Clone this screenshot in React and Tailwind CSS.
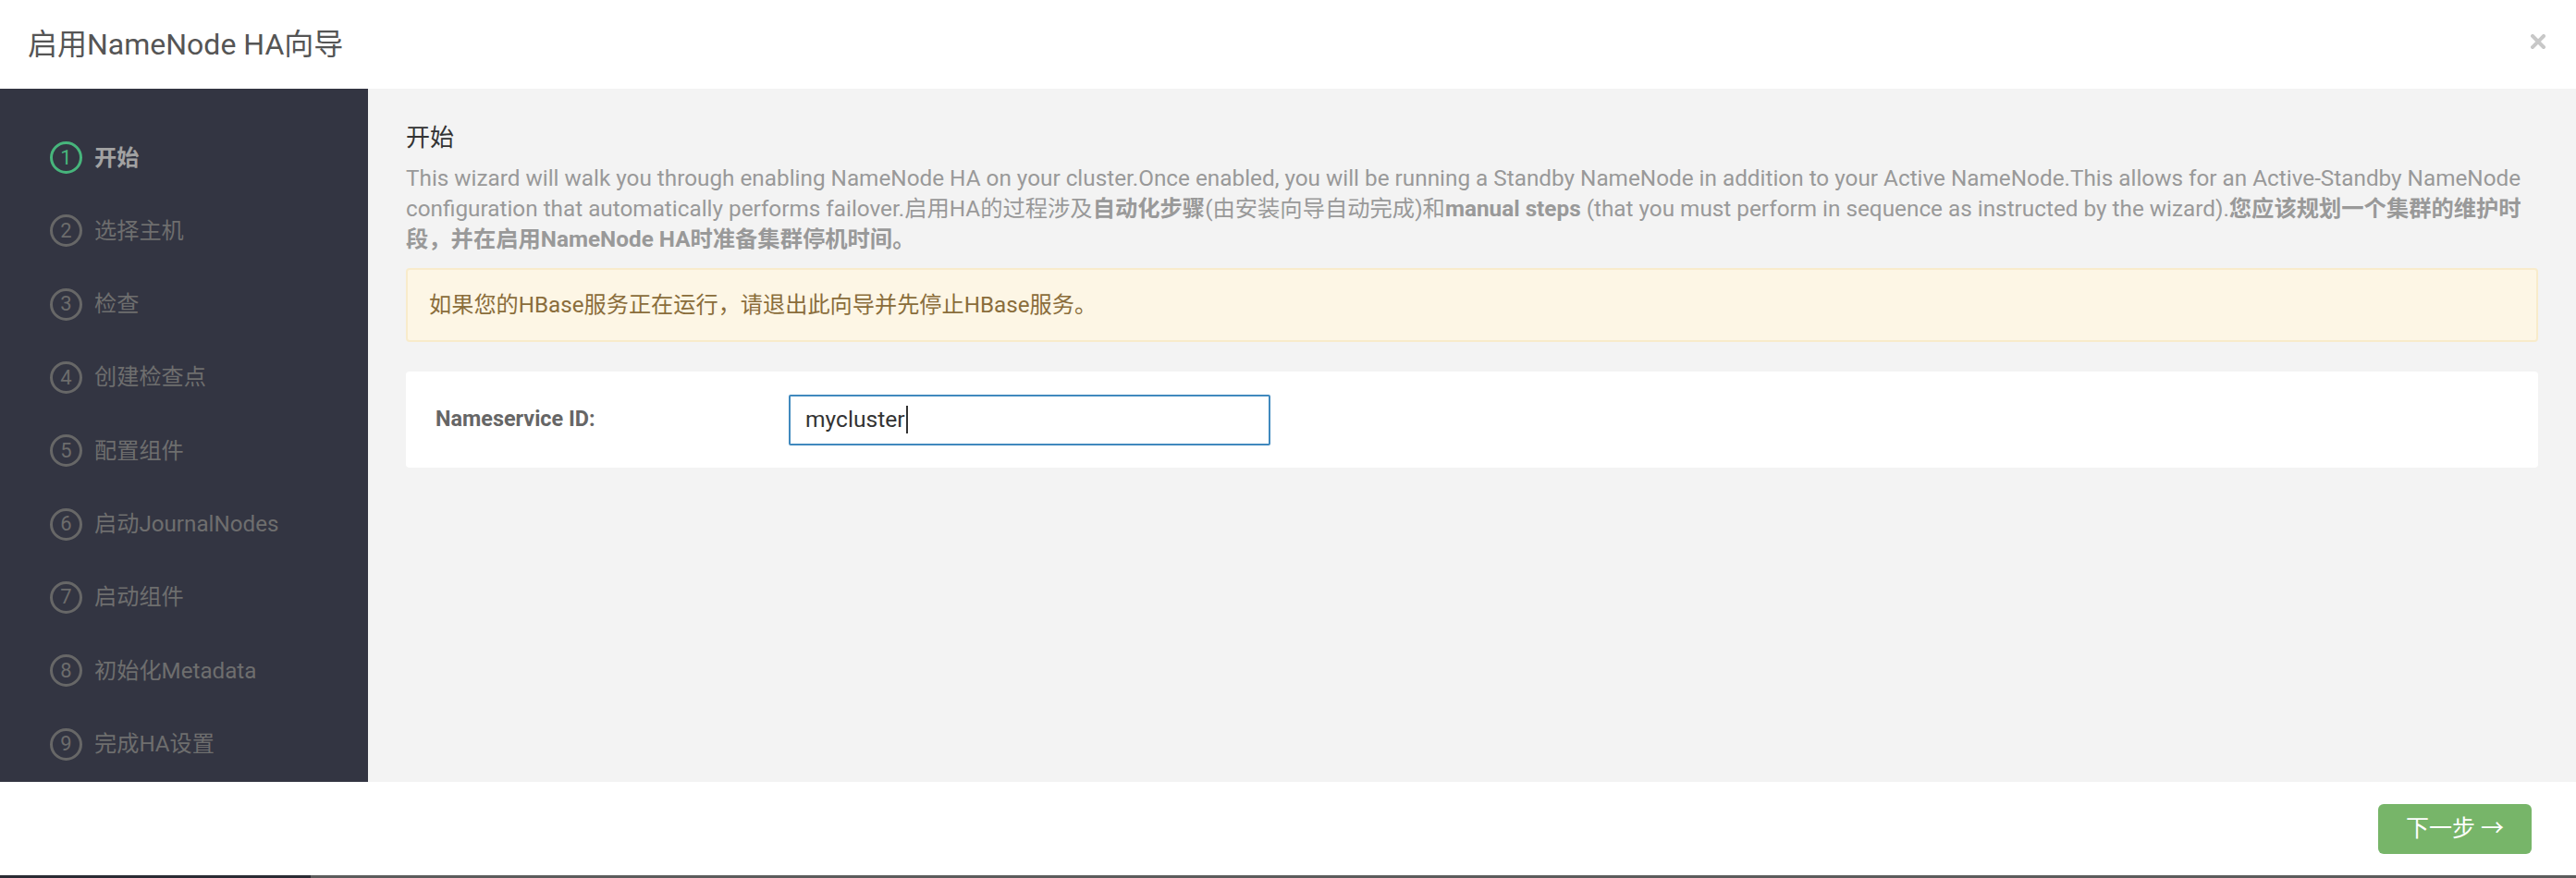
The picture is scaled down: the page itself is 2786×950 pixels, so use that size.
import React from "react";

const steps = [
  "开始",
  "选择主机",
  "检查",
  "创建检查点",
  "配置组件",
  "启动JournalNodes",
  "启动组件",
  "初始化Metadata",
  "完成HA设置",
];

export default function App() {
  return (
    <div
      className="w-[2786px] h-[950px] bg-white flex flex-col overflow-hidden"
      style={{ fontFamily: "Roboto, 'Noto Sans CJK SC', 'Noto Sans', sans-serif" }}
    >
      {/* Header */}
      <div className="h-[96px] flex items-center justify-between pl-[30px] pr-[33px] bg-white">
        <div className="text-[32px] text-[#555555] leading-none">启用NameNode HA向导</div>
        <svg width="16" height="16" viewBox="0 0 16 16" className="mt-[-6px]">
          <path d="M2 2 L14 14 M14 2 L2 14" stroke="#c8c8c8" strokeWidth="4" strokeLinecap="square" />
        </svg>
      </div>

      {/* Body */}
      <div className="h-[750px] flex">
        {/* Sidebar */}
        <div className="w-[398px] bg-[#333542] pt-[35px] pl-[54px] flex flex-col">
          {steps.map((s, i) => {
            const active = i === 0;
            return (
              <div key={s} className="h-[79.3px] flex items-center gap-[13px]">
                <div
                  className={
                    "w-[35px] h-[35px] rounded-full border-[3px] flex items-center justify-center text-[22px] leading-none " +
                    (active ? "border-[#47b57c] text-[#47b57c]" : "border-[#676767] text-[#6c6c6c]")
                  }
                >
                  {i + 1}
                </div>
                <div
                  className={
                    "text-[24.2px] leading-none " +
                    (active ? "text-[#a2a2a2] font-bold" : "text-[#6e6e6e]")
                  }
                >
                  {s}
                </div>
              </div>
            );
          })}
        </div>

        {/* Main */}
        <div className="flex-1 bg-[#f3f3f3] pt-[35px] px-[41px]">
          <div className="text-[26px] leading-[36px] text-[#333333]">开始</div>
          <p className="mt-[9px] text-[24.3px] leading-[33px] text-[#999999]">
            This wizard will walk you through enabling NameNode HA on your cluster.Once enabled, you will be running a Standby NameNode in addition to your Active NameNode.This allows for an Active-Standby NameNode configuration that automatically performs failover.启用HA的过程涉及
            <b className="font-bold">自动化步骤</b>(由安装向导自动完成)和<b className="font-bold">manual steps</b> (that you must perform in sequence as instructed by the wizard).
            <b className="font-bold">您应该规划一个集群的维护时段，并在启用NameNode HA时准备集群停机时间。</b>
          </p>

          <div className="mt-[15px] h-[80px] bg-[#fdf6e5] border-2 border-[#f8ebcb] rounded-[4px] flex items-center pl-[23px] text-[24.2px] text-[#8a6d3b]">
            如果您的HBase服务正在运行，请退出此向导并先停止HBase服务。
          </div>

          <div className="mt-[32px] h-[104px] bg-white rounded-[4px] flex items-center pl-[32px]">
            <div className="w-[382px] text-[23.4px] font-bold text-[#666666]">Nameservice ID:</div>
            <div className="w-[521px] h-[55px] border-2 border-[#4089be] rounded-[2px] bg-white flex items-center pl-[16px] text-[24.6px] text-[#333333]">
              mycluster
              <span className="inline-block w-[2px] h-[30px] bg-[#333333] ml-[1px]" />
            </div>
          </div>
        </div>
      </div>

      {/* Footer */}
      <div className="h-[101px] bg-white flex items-center justify-end pr-[48px]">
        <button className="w-[166px] h-[54px] rounded-[6px] bg-[#77b569] text-white text-[25px] flex items-center justify-center">
          下一步 →
        </button>
      </div>
      <div className="h-[3px] flex">
        <div className="w-[336px] bg-[#2a2b33]" />
        <div className="flex-1 bg-[#5c5c5c]" />
      </div>
    </div>
  );
}
